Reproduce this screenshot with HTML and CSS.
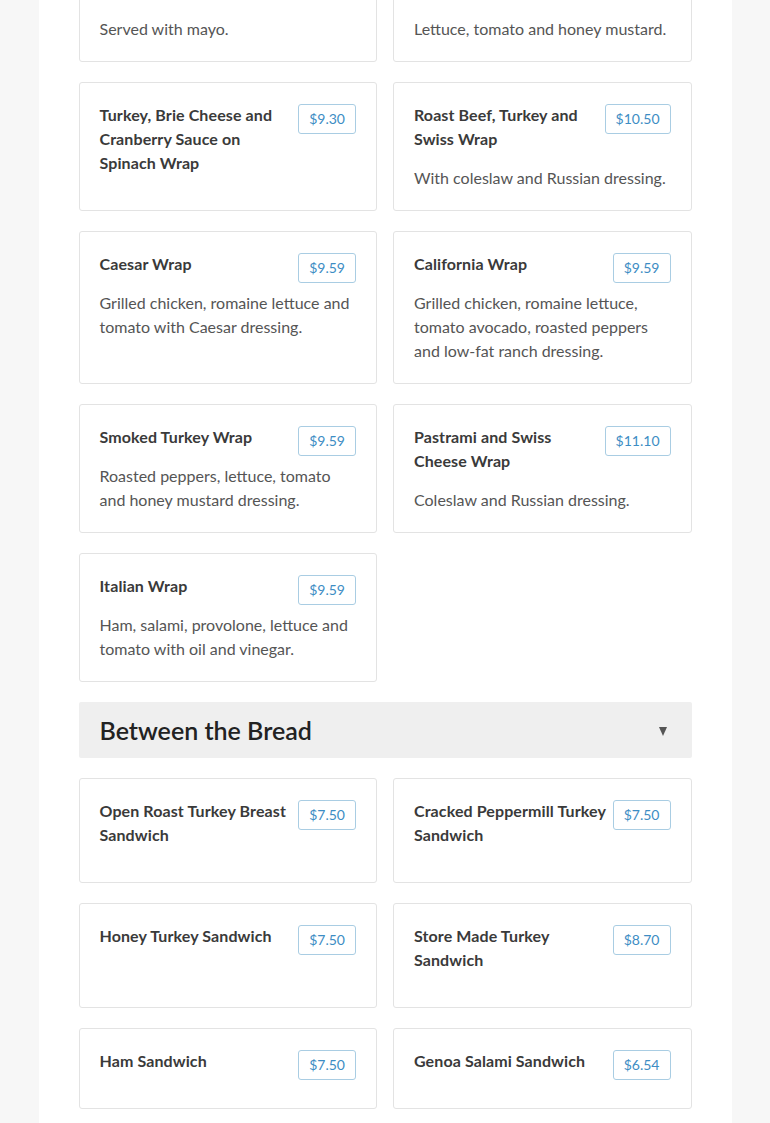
FILE: index.html
```html
<!DOCTYPE html>
<html>
<head>
<meta charset="utf-8">
<link rel="stylesheet" href="styles.css">
</head>
<body>
<div class="page">
  <div class="grid">
    <div class="card">
      <div class="head"><h3 class="title">Chicken Salad Wrap with Lettuce and Tomato</h3><span class="price">$9.30</span></div>
      <p class="desc">Served with mayo.</p>
    </div>
    <div class="card">
      <div class="head"><h3 class="title">Honey Turkey and Swiss Cheese Wrap</h3><span class="price">$9.59</span></div>
      <p class="desc">Lettuce, tomato and honey mustard.</p>
    </div>
    <div class="card">
      <div class="head"><h3 class="title">Turkey, Brie Cheese and Cranberry Sauce on Spinach Wrap</h3><span class="price">$9.30</span></div>
    </div>
    <div class="card">
      <div class="head"><h3 class="title">Roast Beef, Turkey and Swiss Wrap</h3><span class="price">$10.50</span></div>
      <p class="desc">With coleslaw and Russian dressing.</p>
    </div>
    <div class="card">
      <div class="head"><h3 class="title">Caesar Wrap</h3><span class="price">$9.59</span></div>
      <p class="desc">Grilled chicken, romaine lettuce and tomato with Caesar dressing.</p>
    </div>
    <div class="card">
      <div class="head"><h3 class="title">California Wrap</h3><span class="price">$9.59</span></div>
      <p class="desc">Grilled chicken, romaine lettuce, tomato avocado, roasted peppers and low-fat ranch dressing.</p>
    </div>
    <div class="card">
      <div class="head"><h3 class="title">Smoked Turkey Wrap</h3><span class="price">$9.59</span></div>
      <p class="desc">Roasted peppers, lettuce, tomato and honey mustard dressing.</p>
    </div>
    <div class="card">
      <div class="head"><h3 class="title">Pastrami and Swiss Cheese Wrap</h3><span class="price">$11.10</span></div>
      <p class="desc">Coleslaw and Russian dressing.</p>
    </div>
    <div class="card">
      <div class="head"><h3 class="title">Italian Wrap</h3><span class="price">$9.59</span></div>
      <p class="desc">Ham, salami, provolone, lettuce and tomato with oil and vinegar.</p>
    </div>
  </div>

  <div class="section">
    <h2 class="section-title">Between the Bread</h2>
    <span class="caret"></span>
  </div>

  <div class="grid">
    <div class="card">
      <div class="head"><h3 class="title">Open Roast Turkey Breast Sandwich</h3><span class="price">$7.50</span></div>
    </div>
    <div class="card">
      <div class="head"><h3 class="title">Cracked Peppermill Turkey Sandwich</h3><span class="price">$7.50</span></div>
    </div>
    <div class="card">
      <div class="head"><h3 class="title">Honey Turkey Sandwich</h3><span class="price">$7.50</span></div>
    </div>
    <div class="card">
      <div class="head"><h3 class="title">Store Made Turkey Sandwich</h3><span class="price">$8.70</span></div>
    </div>
    <div class="card">
      <div class="head"><h3 class="title">Ham Sandwich</h3><span class="price">$7.50</span></div>
    </div>
    <div class="card">
      <div class="head"><h3 class="title">Genoa Salami Sandwich</h3><span class="price">$6.54</span></div>
    </div>
  </div>
</div>
</body>
</html>
```

FILE: styles.css
```css
html, body {
  margin: 0;
  padding: 0;
}
body {
  background: #f7f7f7;
  font-family: Lato, "Open Sans", sans-serif;
  color: #3a3a3a;
}
.page {
  width: 613px;
  margin: -67px auto 0;
  padding: 0 40px 40px;
  background: #ffffff;
}
.grid {
  display: grid;
  grid-template-columns: 1fr 1fr;
  column-gap: 16px;
  row-gap: 20px;
}
.card {
  border: 1px solid #e3e3e3;
  border-radius: 3px;
  padding: 20px 20px 20px;
  background: #fff;
}
.head {
  display: flex;
  align-items: flex-start;
  justify-content: space-between;
  gap: 2px;
}
.title {
  margin: 0 0 15px;
  font-size: 16px;
  line-height: 24px;
  font-weight: 700;
  letter-spacing: 0.1px;
  color: #3a3a3a;
}
.price {
  flex: none;
  margin-top: 1px;
  border: 1px solid #a9cde3;
  border-radius: 3px;
  padding: 4px 10px;
  font-size: 14px;
  line-height: 20px;
  color: #3d8dc4;
}
.desc {
  margin: 0;
  font-size: 16px;
  line-height: 24px;
  color: #555555;
}
.section {
  display: flex;
  align-items: center;
  justify-content: space-between;
  margin: 20px 0;
  height: 56px;
  padding: 0 25px 0 21px;
  background: #efefef;
  border-radius: 2px;
}
.section-title {
  margin: 0;
  font-size: 25px;
  font-weight: 600;
  color: #222;
  line-height: 30px;
}
.caret {
  width: 0;
  height: 0;
  border-left: 4px solid transparent;
  border-right: 4px solid transparent;
  border-top: 9px solid #555;
  margin-top: 2px;
}
```
